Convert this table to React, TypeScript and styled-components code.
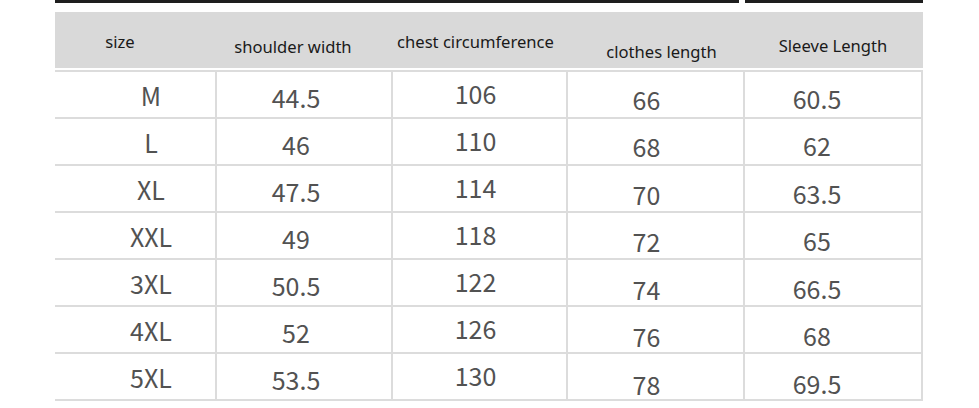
import React from "react";
import styled, { createGlobalStyle } from "styled-components";

const Global = createGlobalStyle`
  html, body { margin: 0; padding: 0; background: #ffffff; }
  body { width: 979px; height: 408px; overflow: hidden; }
`;

const Page = styled.div`
  padding-left: 55px;
  width: 868px;
  display: flex;
  flex-direction: column;
`;

const TopRule = styled.div`
  display: flex;
  gap: 6px;
  height: 3px;
`;

const RuleSegment = styled.div<{ $w: number }>`
  width: ${(p) => p.$w}px;
  background: #1e1e1e;
`;

const COLS = "162px 176px 175px 177px 178px";

const Header = styled.div`
  margin-top: 9px;
  height: 56px;
  background: #d9d9d9;
  display: grid;
  grid-template-columns: ${COLS};
`;

const HeadCell = styled.div<{ $dx: number; $dy: number }>`
  display: flex;
  justify-content: center;
  align-items: center;
  font-family: "Noto Sans", "Open Sans", sans-serif;
  font-size: 16.6px;
  color: #1a1a1a;
  white-space: nowrap;
  transform: translate(${(p) => p.$dx}px, ${(p) => p.$dy}px);
`;

const Body = styled.div`
  margin-top: 2px;
  border-top: 2px solid #dcdcdc;
  display: flex;
  flex-direction: column;
`;

const Row = styled.div`
  display: grid;
  grid-template-columns: ${COLS};
  height: 47px;
  box-sizing: border-box;
  border-bottom: 2px solid #dcdcdc;
`;

const Cell = styled.div<{ $dx: number; $dy: number }>`
  box-sizing: border-box;
  border-right: 2px solid #dcdcdc;
  display: flex;
  justify-content: center;
  align-items: center;
  font-family: "Noto Sans CJK SC", "Noto Sans", sans-serif;
  font-size: 25px;
  color: #525252;
  line-height: 1;
  & > span {
    transform: translate(${(p) => p.$dx}px, ${(p) => p.$dy}px);
  }
`;

const headers = [
  { t: "size", dx: -16, dy: 1 },
  { t: "shoulder width", dx: -12, dy: 6 },
  { t: "chest circumference", dx: -5, dy: 1 },
  { t: "clothes length", dx: 5, dy: 11 },
  { t: "Sleeve Length", dx: -1, dy: 5 },
];

const rows = [
  ["M", "44.5", "106", "66", "60.5"],
  ["L", "46", "110", "68", "62"],
  ["XL", "47.5", "114", "70", "63.5"],
  ["XXL", "49", "118", "72", "65"],
  ["3XL", "50.5", "122", "74", "66.5"],
  ["4XL", "52", "126", "76", "68"],
  ["5XL", "53.5", "130", "78", "69.5"],
];

const colDx = [16, -8, -4, -9, -16];
const colDy = [1, 3, -1, 5, 4];

export default function App() {
  return (
    <>
      <Global />
      <Page>
        <TopRule>
          <RuleSegment $w={684} />
          <RuleSegment $w={178} />
        </TopRule>
        <Header>
          {headers.map((h) => (
            <HeadCell key={h.t} $dx={h.dx} $dy={h.dy}>
              {h.t}
            </HeadCell>
          ))}
        </Header>
        <Body>
          {rows.map((r, ri) => (
            <Row key={ri}>
              {r.map((v, ci) => (
                <Cell key={ci} $dx={colDx[ci]} $dy={colDy[ci] + (ci >= 3 ? Math.floor(ri / 2) : 0)}>
                  <span>{v}</span>
                </Cell>
              ))}
            </Row>
          ))}
        </Body>
      </Page>
    </>
  );
}
